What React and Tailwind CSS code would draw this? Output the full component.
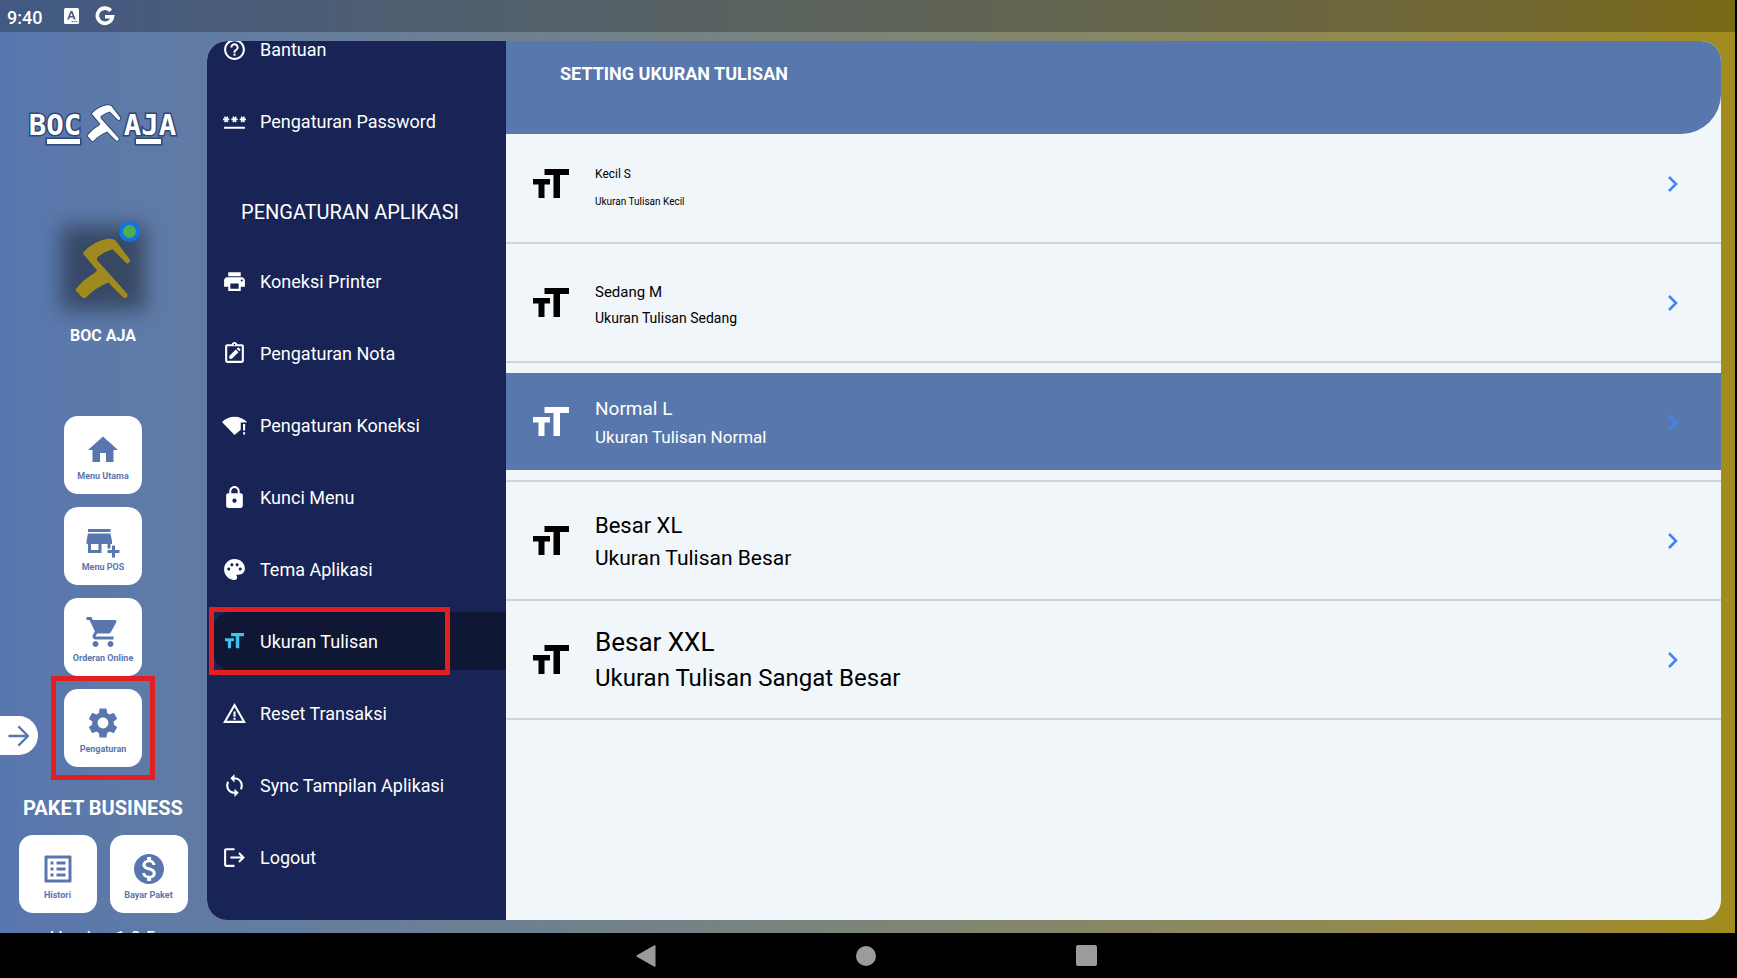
import {
  MdAddBusiness,
  MdHelpOutline,
  MdHome,
  MdListAlt,
  MdLock,
  MdLogout,
  MdMonetizationOn,
  MdPalette,
  MdPassword,
  MdPrint,
  MdSettings,
  MdShoppingCart,
  MdSync,
  MdWarningAmber,
} from "react-icons/md";

function TextSizeIcon({ className }) {
  return (
    <svg viewBox="0 0 36 29" fill="currentColor" className={className} aria-hidden="true">
      <path d="M11.500 0H36v6h-9v23h-6.500V6h-9zM0 10h17v5.500h-5.500V29H5.500V15.500H0z" />
    </svg>
  );
}

function MenuTextSizeIcon({ className }) {
  return (
    <span className={"flex items-center justify-center " + className}>
      <TextSizeIcon className="w-[19px]" />
    </span>
  );
}

function NoteIcon({ className }) {
  return (
    <svg viewBox="0 0 24 24" fill="currentColor" className={className} aria-hidden="true">
      <path d="M19 3h-4.200a3 3 0 0 0-5.600 0H5a2 2 0 0 0-2 2v14c0 1.100.9 2 2 2h14a2 2 0 0 0 2-2V5a2 2 0 0 0-2-2zm-7-.3a.8.8 0 1 1 0 1.600.8.8 0 0 1 0-1.600zM19 19H5V5h14v14z" />
      <path d="M7 17v-2.500l6.300-6.300 2.500 2.500L9.500 17H7zM14.100 7.400l1-1a.8.8 0 0 1 1.100 0l1.400 1.400c.3.300.3.800 0 1.100l-1 1-2.500-2.500z" />
    </svg>
  );
}

function WifiAlertIcon({ className }) {
  return (
    <svg viewBox="0 0 24 24" fill="currentColor" className={className} aria-hidden="true">
      <path d="M0 8.600C3.200 5.400 7.300 3.500 12 3.500s8.900 1.900 12 5.100L23.600 9H18v7l-6 5.200L0 8.600z" />
      <path d="M20.200 10.500h2v6.300h-2zM20.200 18.400h2v2.200h-2z" />
    </svg>
  );
}

const markPath =
  "M231 297Q229 301 232 304L250 323Q255 328 261 323Q290 293 328 278L370 321Q377 327 384 322Q388 317 384 311L296 213Q290 206 298 200Q318 184 341 178L379 217Q385 224 391 218Q395 213 392 208L350 153Q344 146 326 147Q285 154 254 186Q251 190 254 194L294 241Q292 247 284 251Q252 270 231 297Z";

function Mark({ className }) {
  return (
    <svg viewBox="225 142 174 188" fill="currentColor" className={className} aria-hidden="true">
      <path d={markPath} />
    </svg>
  );
}

function BrandLogo() {
  return (
    <svg viewBox="28 102 150 44" className="h-[44px] w-[150px] shrink-0" role="img" aria-label="BOC AJA">
      <g
        fill="#fff"
        stroke="#2f4878"
        strokeWidth="3"
        paintOrder="stroke"
        fontFamily="'DejaVu Sans Mono', monospace"
        fontWeight="700"
        fontSize="29"
        textAnchor="middle"
      >
        <text x="55" y="135">BOC</text>
        <text x="150" y="135">AJA</text>
        <path d="M47 139h33v5H47zM136 139h25v5h-25z" />
      </g>
      <svg x="86" y="103" width="36" height="40" viewBox="222 139 180 194">
        <path fill="#fff" stroke="#2f4878" strokeWidth="10" paintOrder="stroke" d={markPath} />
      </svg>
    </svg>
  );
}

function Card({ icon: Icon, label, highlighted }) {
  return (
    <button
      type="button"
      className="relative flex size-[78px] shrink-0 flex-col items-center gap-0.5 rounded-[14px] bg-white pt-4 text-[#5877ad]"
    >
      <Icon className="size-9" />
      <span className="text-[9px] leading-3 font-bold whitespace-nowrap">{label}</span>
      {highlighted && <span className="absolute -inset-[13px] border-5 border-[#e21f20]" />}
    </button>
  );
}

const accountItems = [
  { label: "Bantuan", icon: MdHelpOutline },
  { label: "Pengaturan Password", icon: MdPassword },
];

const appItems = [
  { label: "Koneksi Printer", icon: MdPrint },
  { label: "Pengaturan Nota", icon: NoteIcon },
  { label: "Pengaturan Koneksi", icon: WifiAlertIcon },
  { label: "Kunci Menu", icon: MdLock },
  { label: "Tema Aplikasi", icon: MdPalette },
  { label: "Ukuran Tulisan", icon: MenuTextSizeIcon, active: true },
  { label: "Reset Transaksi", icon: MdWarningAmber },
  { label: "Sync Tampilan Aplikasi", icon: MdSync },
  { label: "Logout", icon: MdLogout },
];

const sizes = [
  { title: "Kecil S", note: "Ukuran Tulisan Kecil", block: "leading-7 pt-2", titleSize: "text-[12px]", noteSize: "text-[10px]" },
  { title: "Sedang M", note: "Ukuran Tulisan Sedang", block: "leading-[26px] pt-1", titleSize: "text-[15px]", noteSize: "text-[14px]" },
  { title: "Normal L", note: "Ukuran Tulisan Normal", block: "leading-7 pt-0.5", titleSize: "text-[19px]", noteSize: "text-[17px]", active: true },
  { title: "Besar XL", note: "Ukuran Tulisan Besar", block: "leading-8 pt-0.5", titleSize: "text-[22px]", noteSize: "text-[21px]" },
  { title: "Besar XXL", note: "Ukuran Tulisan Sangat Besar", block: "leading-9", titleSize: "text-[26px]", noteSize: "text-[24px]" },
];

function MenuItem({ icon: Icon, label, active }) {
  return (
    <li>
      <a
        href="#"
        className={
          "relative flex h-[58px] items-center gap-[13px] rounded-l-2xl pl-2 text-[18px] text-white " +
          (active ? "bg-[#0f1734]" : "")
        }
      >
        <Icon className={"size-[25px] shrink-0 " + (active ? "text-[#3ec5ee]" : "")} />
        {label}
        {active && (
          <span className="absolute -inset-y-[5px] right-[56px] -left-[5px] border-5 border-[#e21f20]" />
        )}
      </a>
    </li>
  );
}

function SizeRow({ title, note, block, titleSize, noteSize, active, first }) {
  return (
    <li className={"border-b-2 border-[#d0d5da] pb-2.5 " + (first ? "" : "pt-2.5")}>
      <button
        type="button"
        className={
          "flex h-[97px] w-full items-center pr-10 pl-[27px] text-left " +
          (active ? "bg-[#5877ad] text-white" : "text-black")
        }
      >
        <TextSizeIcon className="w-9 shrink-0" />
        <span className={"flex flex-1 flex-col pl-[26px] " + block}>
          <span className={titleSize}>{title}</span>
          <span className={noteSize}>{note}</span>
        </span>
        <svg viewBox="0 0 16 20" className="h-5 w-4 text-[#4285f0]" fill="none" stroke="currentColor" strokeWidth="2.600" aria-hidden="true">
          <path d="M4 3l7 7-7 7" />
        </svg>
      </button>
    </li>
  );
}

export default function App() {
  return (
    <div className="flex h-screen flex-col overflow-hidden bg-black font-['Roboto',sans-serif]">
      <div className="mr-0.5 flex min-h-0 flex-1 flex-col bg-linear-to-r from-[#5877af] to-[#a28c1c]">
        <header className="flex h-8 shrink-0 items-center bg-black/25 pl-[7px] text-white">
          <span className="w-[57px] pt-0.5 text-[18px] font-medium">9:40</span>
          <svg viewBox="0 0 15 16" className="h-4 w-[15px]" aria-hidden="true">
            <rect width="15" height="16" rx="1.500" fill="#fff" />
            <path d="M3.200 11.500 6.500 3h1.900l3.300 8.500H9.800l-.7-2H5.800l-.7 2zM6.300 8h2.300L7.450 4.900z" fill="#485b7c" />
            <path d="M7.500 13.600h6" stroke="#485b7c" strokeWidth="1" strokeDasharray="1.500 .7" />
          </svg>
          <svg viewBox="0 0 20 20" className="ml-4 size-5" fill="none" stroke="#fff" strokeWidth="3.600" aria-hidden="true">
            <path d="M15.700 4.700A7.600 7.600 0 1 0 17.500 10.800H10" />
          </svg>
        </header>

        <div className="flex min-h-0 flex-1">
          <aside className="relative flex w-[207px] shrink-0 flex-col items-center overflow-hidden pt-[70px] pr-px text-white">
            <BrandLogo />
            <div className="relative mt-[88px] flex size-[68px] shrink-0 items-center justify-center">
              <span className="absolute -inset-2 bg-black/40 blur-[10px]" />
              <Mark className="relative h-[63px] w-[58px] text-[#a08a1f]" />
              <span className="absolute -top-[13px] -right-[3px] size-[21px] rounded-full border-[4px] border-[#1573e0] bg-[#4caf50]" />
            </div>
            <p className="mt-[22px] text-[16px] leading-6 font-bold">BOC AJA</p>
            <nav className="mt-[68px] flex flex-col gap-[13px]">
              <Card icon={MdHome} label="Menu Utama" />
              <Card icon={MdAddBusiness} label="Menu POS" />
              <Card icon={MdShoppingCart} label="Orderan Online" />
              <Card icon={MdSettings} label="Pengaturan" highlighted />
            </nav>
            <button
              type="button"
              aria-label="Buka menu"
              className="absolute top-[684px] left-0 flex h-[39px] w-[38px] items-center justify-center rounded-r-full bg-white"
            >
              <svg viewBox="0 0 22 22" className="size-[22px]" fill="none" stroke="#5877ad" strokeWidth="2.400" strokeLinecap="round" strokeLinejoin="round" aria-hidden="true">
                <path d="M1.500 11h18M11 2l9 9-9 9" />
              </svg>
            </button>
            <p className="mt-[27px] text-[20px] leading-7 font-bold">PAKET BUSINESS</p>
            <div className="mt-[13px] flex gap-[13px]">
              <Card icon={MdListAlt} label="Histori" />
              <Card icon={MdMonetizationOn} label="Bayar Paket" />
            </div>
            <p className="mt-[11px] text-[18px] leading-7">Version 1.0.5</p>
          </aside>

          <main className="mt-[9px] mr-[14px] mb-[13px] flex min-w-0 flex-1 overflow-hidden rounded-[20px] bg-[#f1f6fb]">
            <nav className="w-[299px] shrink-0 overflow-hidden bg-[#182356] pl-[7px]">
              <ul className="-mt-[21px] flex flex-col gap-[14px]">
                {accountItems.map((item) => (
                  <MenuItem key={item.label} {...item} />
                ))}
              </ul>
              <h2 className="mt-12 mb-[26px] pr-5 text-center text-[20px] leading-7 text-white">
                PENGATURAN APLIKASI
              </h2>
              <ul className="flex flex-col gap-[14px]">
                {appItems.map((item) => (
                  <MenuItem key={item.label} {...item} />
                ))}
              </ul>
            </nav>
            <section className="min-w-0 flex-1">
              <h1 className="h-[93px] rounded-br-[40px] bg-[#5877ad] pt-[19px] pl-[54px] text-[18px] leading-7 font-bold text-white">
                SETTING UKURAN TULISAN
              </h1>
              <ul className="pt-px">
                {sizes.map((item, i) => (
                  <SizeRow key={item.title} {...item} first={i === 0} />
                ))}
              </ul>
            </section>
          </main>
        </div>
      </div>

      <footer className="flex h-[45px] shrink-0 items-center justify-center gap-[200px] pr-1 text-[#9b9b9b]">
        <button type="button" aria-label="Kembali">
          <svg viewBox="0 0 20 22" className="h-[22px] w-5" fill="currentColor" aria-hidden="true">
            <path d="M18.500.3Q19.500 0 19.500 1v20q0 1-1 .7L.8 11.700q-1-.7 0-1.400z" />
          </svg>
        </button>
        <button type="button" aria-label="Beranda" className="size-5 rounded-full bg-current" />
        <button type="button" aria-label="Aplikasi terbaru" className="size-[21px] rounded-xs bg-current" />
      </footer>
    </div>
  );
}
